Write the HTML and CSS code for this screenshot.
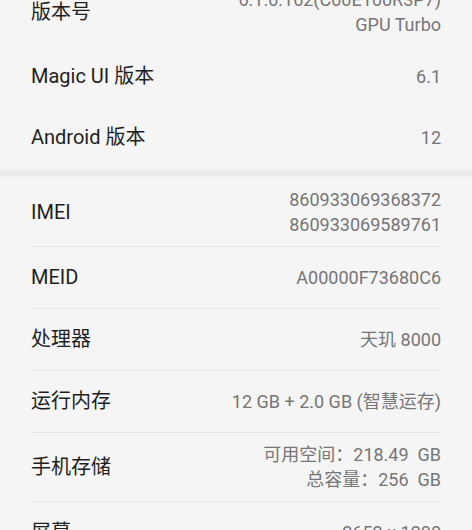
FILE: index.html
```html
<!DOCTYPE html>
<html lang="zh">
<head>
<meta charset="utf-8">
<link rel="stylesheet" href="styles.css">
</head>
<body>
<div class="page">
  <section class="group group-top">
    <div class="row">
      <div class="label">版本号</div>
      <div class="value"><div>6.1.0.162(C00E160R3P7)</div><div>GPU Turbo</div></div>
    </div>
    <div class="row">
      <div class="label">Magic UI 版本</div>
      <div class="value">6.1</div>
    </div>
    <div class="row">
      <div class="label">Android 版本</div>
      <div class="value">12</div>
    </div>
  </section>
  <div class="band"></div>
  <section class="group group-lined">
    <div class="row">
      <div class="label">IMEI</div>
      <div class="value"><div>860933069368372</div><div>860933069589761</div></div>
    </div>
    <div class="row">
      <div class="label">MEID</div>
      <div class="value">A00000F73680C6</div>
    </div>
    <div class="row">
      <div class="label">处理器</div>
      <div class="value">天玑 8000</div>
    </div>
    <div class="row">
      <div class="label">运行内存</div>
      <div class="value">12 GB + 2.0 GB (智慧运存)</div>
    </div>
    <div class="row">
      <div class="label">手机存储</div>
      <div class="value"><div>可用空间：218.49&nbsp; GB</div><div>总容量：256&nbsp; GB</div></div>
    </div>
    <div class="row">
      <div class="label">屏幕</div>
      <div class="value">2652 x 1200</div>
    </div>
  </section>
</div>
</body>
</html>
```

FILE: styles.css
```css
html, body {
  margin: 0;
  padding: 0;
  background: #f5f5f5;
  height: 100%;
  overflow: hidden;
}
body {
  font-family: Roboto, "Noto Sans CJK SC", sans-serif;
}
.page {
  margin-top: -22px;
}
.group {
  padding: 0 31px;
}
.row {
  display: flex;
  align-items: center;
  justify-content: space-between;
  min-height: 43px;
  padding: 9px 0;
}
.group-lined .row {
  border-bottom: 1.5px solid #e7e7e7;
}
.label {
  font-size: 20px;
  color: #1e1e1e;
  line-height: 25px;
}
.value {
  font-size: 18px;
  color: #767676;
  line-height: 25px;
  text-align: right;
}
.band {
  height: 10px;
  background: linear-gradient(#f2f2f2, #e8e8e8 60%, #efefef 85%, #f5f5f5);
}
```
